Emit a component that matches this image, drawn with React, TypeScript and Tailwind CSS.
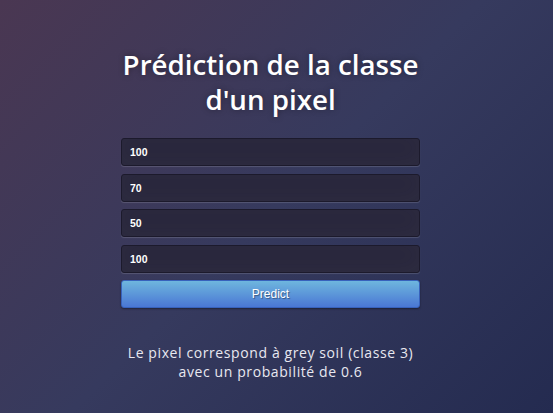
import React from "react";

const values = ["100", "70", "50", "100"];

export default function App() {
  return (
    <div className="min-h-[413px] w-full bg-[linear-gradient(135deg,#4a3752_0%,#363a5e_50%,#242b50_100%)] flex justify-center pr-[12px] font-['Open_Sans',sans-serif]">
      <div className="w-[299px] pt-[47px] flex flex-col">
        <h1 className="text-center text-white font-semibold text-[27.7px] leading-[35px] [text-shadow:0_0_6px_rgba(0,0,0,0.35)]">
          Prédiction de la classe d'un pixel
        </h1>
        <form className="mt-[21px] flex flex-col gap-[7.5px]" onSubmit={(e) => e.preventDefault()}>
          {values.map((v, i) => (
            <input
              key={i}
              defaultValue={v}
              className="h-[28px] w-full rounded-[3px] border border-[#1c1a2c] bg-[#29273d] px-[8px] text-[10.5px] font-bold text-white font-['Liberation_Sans',Arial,sans-serif] shadow-[inset_0_-4px_20px_rgba(100,100,100,0.08),0_1px_1px_rgba(255,255,255,0.15)] outline-none"
            />
          ))}
          <button
            type="submit"
            className="h-[28px] w-full rounded-[3px] border border-[#3762bc] bg-[linear-gradient(to_bottom,#6eb6de,#4a77d4)] text-[12px] text-white font-['Liberation_Sans',Arial,sans-serif] [text-shadow:1px_1px_1px_rgba(0,0,0,0.4)] shadow-[0_1px_2px_rgba(0,0,0,0.4)]"
          >
            Predict
          </button>
        </form>
        <p className="mt-[35px] text-center text-[14px] leading-[19px] tracking-[0.6px] text-[#e8e8f0]">
          Le pixel correspond à grey soil (classe 3)
          <br />
          avec un probabilité de 0.6
        </p>
      </div>
    </div>
  );
}
